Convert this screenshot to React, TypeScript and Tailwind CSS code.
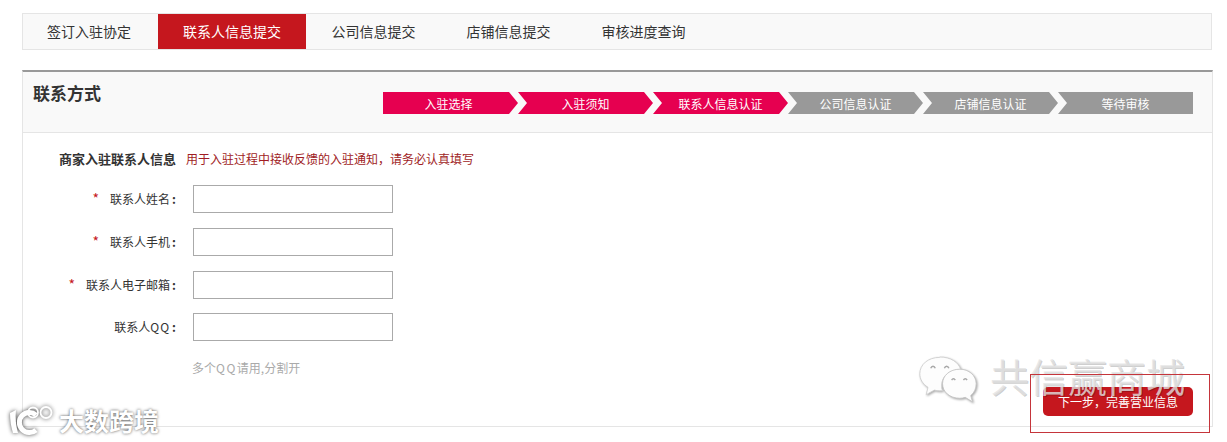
const FONT = "font-['Noto_Sans_CJK_SC','Noto_Sans',sans-serif]";

const tabs = ["签订入驻协定", "联系人信息提交", "公司信息提交", "店铺信息提交", "审核进度查询"];

const steps = [
  { label: "入驻选择", active: true },
  { label: "入驻须知", active: true },
  { label: "联系人信息认证", active: true },
  { label: "公司信息认证", active: false },
  { label: "店铺信息认证", active: false },
  { label: "等待审核", active: false },
];

const fields = [
  { label: "联系人姓名", required: true, qq: false },
  { label: "联系人手机", required: true, qq: false },
  { label: "联系人电子邮箱", required: true, qq: false },
  { label: "联系人", required: false, qq: true },
];

function stepShape(index: number) {
  if (index === 0) return "pr-1 [clip-path:polygon(0_0,126px_0,135px_50%,126px_100%,0_100%)]";
  if (index === 5) return "[clip-path:polygon(0_0,100%_0,100%_100%,0_100%,9px_50%)]";
  return "[clip-path:polygon(0_0,126px_0,135px_50%,126px_100%,0_100%,9px_50%)]";
}

function WeChatMark() {
  return (
    <svg width="60" height="52" viewBox="0 0 66 56" fill="none" className="shrink-0 drop-shadow-[1px_1px_1px_rgba(0,0,0,0.35)]">
      <path
        d="M24 2C11 2 2 10 2 20c0 6 3 11 9 15l-2 8 9-5c2 .5 4 .8 6 .8 1 0 2 0 3-.2-1-2-1-4-1-6 0-10 9-17 21-17-2-8-11-14-23-14z"
        fill="#fdfdfd"
        stroke="#d0d0d0"
        strokeWidth="1"
      />
      <path
        d="M46 15c-11 0-19 7-19 16s8 16 19 16c2 0 4-.3 6-1l8 5-2-7c4-3 6-8 6-13 0-9-8-16-18-16z"
        fill="#fdfdfd"
        stroke="#c4c4c4"
        strokeWidth="1"
      />
      <path d="M14 14c1-3 4-3 5 0M29 14c1-3 4-3 5 0M37 27c1-2 3-2 4 0M50 27c1-2 3-2 4 0" stroke="#a8a8a8" strokeWidth="1.5" />
    </svg>
  );
}

function LogoMark() {
  return (
    <svg width="48" height="30" viewBox="0 0 48 30" fill="none" className="drop-shadow-[0_0_2px_rgba(0,0,0,0.7)]">
      <path d="M1 8l6-3c-1 8 0 16 2 23H4C2 22 1 15 1 8z" fill="#fff" />
      <path d="M27 10A10 10 0 1 0 27 25" stroke="#fff" strokeWidth="5" />
      <circle cx="24" cy="7.5" r="5" stroke="#fff" strokeWidth="1.8" />
      <circle cx="37" cy="7.5" r="5.5" stroke="#fff" strokeWidth="1.8" />
    </svg>
  );
}

export default function App() {
  return (
    <div className={`${FONT} relative w-[1227px] h-[442px] overflow-hidden bg-white pt-[13px] pl-[22px] text-[#333]`}>
      {/* Tabs */}
      <div className="flex w-[1190px] h-[37px] border border-[#e5e5e5] bg-[#f9f9f9] text-[14px] leading-[35px]">
        {tabs.map((tab, index) => (
          <div
            key={tab}
            className={
              index === 1
                ? "px-[25px] bg-[#c5171e] text-white"
                : index === 0
                  ? "pl-6 pr-[27px]"
                  : "px-[25.5px]"
            }
          >
            {tab}
          </div>
        ))}
      </div>

      {/* Panel */}
      <div className="mt-5 w-[1191px] h-[357px] border-t-2 border-x border-b border-x-[#e5e5e5] border-b-[#e5e5e5] border-t-[#999] flex flex-col">
        <div className="flex h-[61px] shrink-0 border-b border-[#e5e5e5] bg-[#f9f9f9]">
          <h2 className="w-[360px] pl-[10px] pt-[9px] text-[17px] leading-6 font-bold">联系方式</h2>
          <div className="flex mt-5 h-[22px]">
            {steps.map((step, index) => (
              <div
                key={step.label}
                className={`w-[135px] text-center text-white text-[12px] leading-[24px] ${stepShape(index)} ${step.active ? "bg-[#e60050]" : "bg-[#999]"}`}
              >
                {step.label}
              </div>
            ))}
          </div>
        </div>

        <div className="flex items-baseline pt-[16px] h-[52px] shrink-0 leading-5">
          <span className="w-[153px] text-right text-[13px] font-bold">商家入驻联系人信息</span>
          <span className="ml-[10px] text-[12px] text-[#a01c24]">用于入驻过程中接收反馈的入驻通知，请务必认真填写</span>
        </div>

        <div className="flex flex-col gap-[15px]">
          {fields.map((field, index) => (
            <div key={field.label} className={index === 3 ? "flex items-center -mt-px" : "flex items-center"}>
              <label className="w-[153px] text-right text-[12px]">
                {field.required && <span className="mr-[11px] text-[14px] leading-3 text-[#c5171e]">*</span>}
                {field.label}
                {field.qq && <span className="tracking-[1px]">QQ</span>}
                <span className="ml-[2px] font-bold">:</span>
              </label>
              <input className="ml-[17px] w-[200px] h-[28px] border border-[#aaa] bg-white" />
            </div>
          ))}
        </div>

        <p className="ml-[169px] mt-[17px] text-[12px] leading-5 text-[#aaa]">
          多个<span className="tracking-[1.5px]">QQ</span>请用,分割开
        </p>

        <div className="flex justify-end pr-[19px] mt-[9px]">
          <button className="w-[150px] h-[29px] rounded-[5px] bg-[#c5171e] text-white text-[12px]">下一步，完善营业信息</button>
        </div>
      </div>

      {/* Watermarks over the page */}
      <div className="absolute left-[918px] top-[355px] flex items-start gap-[12px] text-[#e2e2e2]/80 text-[39px] leading-[40px] [text-shadow:1px_1px_0_rgba(0,0,0,0.2)]">
        <WeChatMark />
        <span>共信赢商城</span>
      </div>
      <div className="absolute left-[9px] top-[405px]">
        <LogoMark />
      </div>
      <span className="absolute left-[59px] top-[404px] text-white text-[25px] leading-8 font-bold [text-shadow:0_0_3px_rgba(0,0,0,0.7)]">大数跨境</span>

      {/* Red marker box */}
      <div className="absolute left-[1030px] top-[374px] w-[180px] h-[59px] border border-[#c5353b]" />
    </div>
  );
}
